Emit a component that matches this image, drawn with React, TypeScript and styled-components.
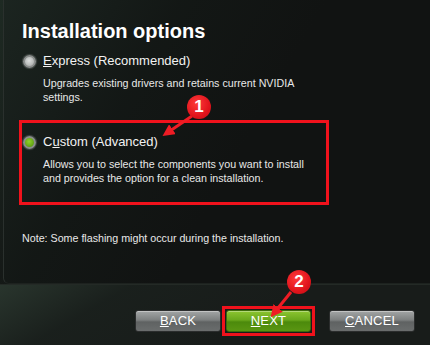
import React from 'react';
import styled, { createGlobalStyle } from 'styled-components';

const GlobalStyle = createGlobalStyle`
  html, body {
    margin: 0;
    padding: 0;
    background: #111413;
  }
  body {
    font-family: "Liberation Sans", Arial, sans-serif;
  }
`;

interface OptionProps {
  accessKey: string;
  label: string;
  description: string;
  selected?: boolean;
}

const Option: React.FC<OptionProps> = ({ accessKey, label, description, selected }) => {
  const idx = label.indexOf(accessKey);
  return (
    <OptionBlock>
      <OptionRow>
        <Radio selected={selected} />
        <OptionLabel>
          {label.slice(0, idx)}
          <u>{accessKey}</u>
          {label.slice(idx + 1)}
        </OptionLabel>
      </OptionRow>
      <Description>{description}</Description>
    </OptionBlock>
  );
};

const Badge: React.FC<{ n: number; x: number; y: number }> = ({ n, x, y }) => (
  <BadgeCircle style={{ left: x - 12, top: y - 12 }}>{n}</BadgeCircle>
);

const App: React.FC = () => {
  return (
    <>
      <GlobalStyle />
      <Frame>
        <Panel>
          <Title>Installation options</Title>
          <Option
            accessKey="E"
            label="Express (Recommended)"
            description="Upgrades existing drivers and retains current NVIDIA settings."
          />
          <Highlight>
            <Option
              accessKey="u"
              label="Custom (Advanced)"
              description="Allows you to select the components you want to install and provides the option for a clean installation."
              selected
            />
          </Highlight>
          <Note>Note: Some flashing might occur during the installation.</Note>
        </Panel>
        <Footer>
          <Button>
            <u>B</u>ACK
          </Button>
          <NextWrap>
            <Button primary>
              <u>N</u>EXT
            </Button>
          </NextWrap>
          <Button>
            <u>C</u>ANCEL
          </Button>
        </Footer>

        <Arrows width="430" height="345" viewBox="0 0 430 345">
          <defs>
            <marker id="head" markerWidth="4" markerHeight="4" refX="2.2" refY="2" orient="auto">
              <path d="M0,0 L4,2 L0,4 Z" fill="#ee1c24" />
            </marker>
          </defs>
          <line x1="192" y1="116" x2="167" y2="133" stroke="#ee1c24" strokeWidth="3" markerEnd="url(#head)" />
          <line x1="291" y1="292" x2="274" y2="313" stroke="#ee1c24" strokeWidth="3" markerEnd="url(#head)" />
        </Arrows>
        <Badge n={1} x={199} y={107} />
        <Badge n={2} x={299} y={282} />
      </Frame>
    </>
  );
};

export default App;

const Frame = styled.div`
  position: relative;
  width: 430px;
  height: 345px;
  overflow: hidden;
  display: flex;
  flex-direction: column;
  background:
    linear-gradient(125deg, rgba(40, 60, 48, 0.55) 0%, rgba(20, 28, 24, 0) 38%),
    linear-gradient(160deg, rgba(0, 0, 0, 0) 55%, rgba(30, 44, 34, 0.35) 80%, rgba(0, 0, 0, 0) 100%),
    #121413;
`;

const Panel = styled.div`
  height: 284px;
  box-sizing: border-box;
  margin: 0 0 0 3px;
  padding: 19px 18px 0 19px;
  border-left: 1px solid #2a302d;
  border-bottom: 1px solid #1d221f;
  border-bottom-left-radius: 6px;
  display: flex;
  flex-direction: column;
  background:
    linear-gradient(120deg, rgba(32, 44, 38, 0.7) 0%, rgba(22, 30, 26, 0.4) 30%, rgba(17, 19, 18, 0) 55%),
    #111312;
`;

const Title = styled.h1`
  margin: 0 0 9px -1px;
  font-size: 20px;
  line-height: 24px;
  font-weight: 700;
  color: #ffffff;
`;

const OptionBlock = styled.div`
  display: flex;
  flex-direction: column;
`;

const OptionRow = styled.div`
  display: flex;
  align-items: center;
  gap: 7px;
`;

const Radio = styled.span<{ selected?: boolean }>`
  width: 13px;
  height: 13px;
  border-radius: 50%;
  box-sizing: border-box;
  border: 2px solid #8a8d8c;
  box-shadow: 0 0 1px 1px rgba(150, 155, 152, 0.35);
  background: ${({ selected }) =>
    selected
      ? 'radial-gradient(circle at 45% 40%, #8fd02c 0%, #5e9e12 75%)'
      : 'radial-gradient(circle at 45% 40%, #dcdedd 0%, #b0b3b2 75%)'};
`;

const OptionLabel = styled.span`
  font-size: 13px;
  line-height: 18px;
  color: #f2f2f2;
`;

const Description = styled.p`
  margin: 6px 0 0 20px;
  width: 275px;
  font-size: 10.7px;
  line-height: 14px;
  color: #e8e8e8;
`;

const Highlight = styled.div`
  margin: 16px 0 0 -4px;
  width: 310px;
  height: 85px;
  box-sizing: border-box;
  border: 3px solid #f0121c;
  padding: 10px 0 0 1px;
`;

const Note = styled.p`
  margin: 26px 0 0 -1px;
  font-size: 10.7px;
  line-height: 14px;
  color: #e8e8e8;
`;

const Footer = styled.div`
  flex: 1;
  display: flex;
  align-items: center;
  justify-content: flex-end;
  padding: 11px 15px 0 0;
  background:
    linear-gradient(150deg, rgba(58, 78, 64, 0.5) 0%, rgba(30, 40, 34, 0.3) 25%, rgba(20, 24, 22, 0) 60%),
    #181c1a;
  border-top: 1px solid #242a26;
`;

const NextWrap = styled.div`
  display: flex;
  margin: -4px 14px -4px 1px;
  border: 3px solid #f0121c;
  padding: 1px;
`;

const Button = styled.button<{ primary?: boolean }>`
  width: ${({ primary }) => (primary ? 85 : 86)}px;
  height: 22px;
  padding: 0;
  border: 1px solid ${({ primary }) => (primary ? '#3d6a0c' : '#2b2d2d')};
  border-radius: 3px;
  font-family: "Liberation Sans", Arial, sans-serif;
  font-size: 13px;
  color: #ffffff;
  letter-spacing: 0.2px;
  background: ${({ primary }) =>
    primary
      ? 'linear-gradient(#8cc531 0%, #6aa81c 45%, #4c8a0c 55%, #5a9612 100%)'
      : 'linear-gradient(#a3a6a6 0%, #7d8080 45%, #5f6262 55%, #6a6d6d 100%)'};
  box-shadow: inset 0 1px 0 rgba(255, 255, 255, 0.35);
`;

const Arrows = styled.svg`
  position: absolute;
  left: 0;
  top: 0;
  pointer-events: none;
`;

const BadgeCircle = styled.div`
  position: absolute;
  width: 24px;
  height: 24px;
  border-radius: 50%;
  background: radial-gradient(circle at 40% 35%, #ff3a3a 0%, #e0141c 60%, #c00c12 100%);
  color: #ffffff;
  font-size: 17px;
  font-weight: 700;
  line-height: 24px;
  text-align: center;
`;
